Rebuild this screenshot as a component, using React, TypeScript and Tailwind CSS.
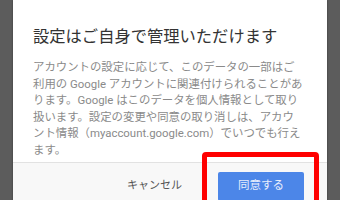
import React from "react";

export default function App() {
  const font = { fontFamily: 'Roboto, "Noto Sans CJK JP", sans-serif' };
  return (
    <div className="relative h-[200px] w-[340px] overflow-hidden bg-[#5c5c5c]" style={font}>
      <div className="relative ml-[13px] mt-0 h-[220px] w-[314px] bg-white shadow-[0_0_2px_rgba(0,0,0,0.4)] flex flex-col">
        <div className="pl-[20px] pt-[27px] text-[16.3px] leading-[20px] text-[#333333]">
          設定はご自身で管理いただけます
        </div>
        <div className="pl-[20px] pt-[12px] text-[11.4px] leading-[16.6px] text-[#8a8a8a] whitespace-pre">
          {"アカウントの設定に応じて、このデータの一部はご\n利用の Google アカウントに関連付けられることがあ\nります。Google はこのデータを個人情報として取り\n扱います。設定の変更や同意の取り消しは、アカウ\nント情報（myaccount.google.com）でいつでも行え\nます。"}
        </div>
        <div className="mt-[3px] flex-1 border-t border-[#e2e2e2] bg-[#f8f8f8] flex justify-end items-start pt-[9px] pr-[23px]">
          <div className="h-[29px] flex items-center mr-[36px] text-[11px] text-[#555555]">キャンセル</div>
          <div className="h-[29px] w-[86px] rounded-[2px] bg-[#4c86e8] flex items-center justify-center text-[11.5px] text-[#e8eefc]">同意する</div>
        </div>
        <div className="absolute left-[189px] top-[152px] w-[117px] h-[70px] border-[5px] border-[#ff0000] rounded-[4px]"></div>
      </div>
    </div>
  );
}
